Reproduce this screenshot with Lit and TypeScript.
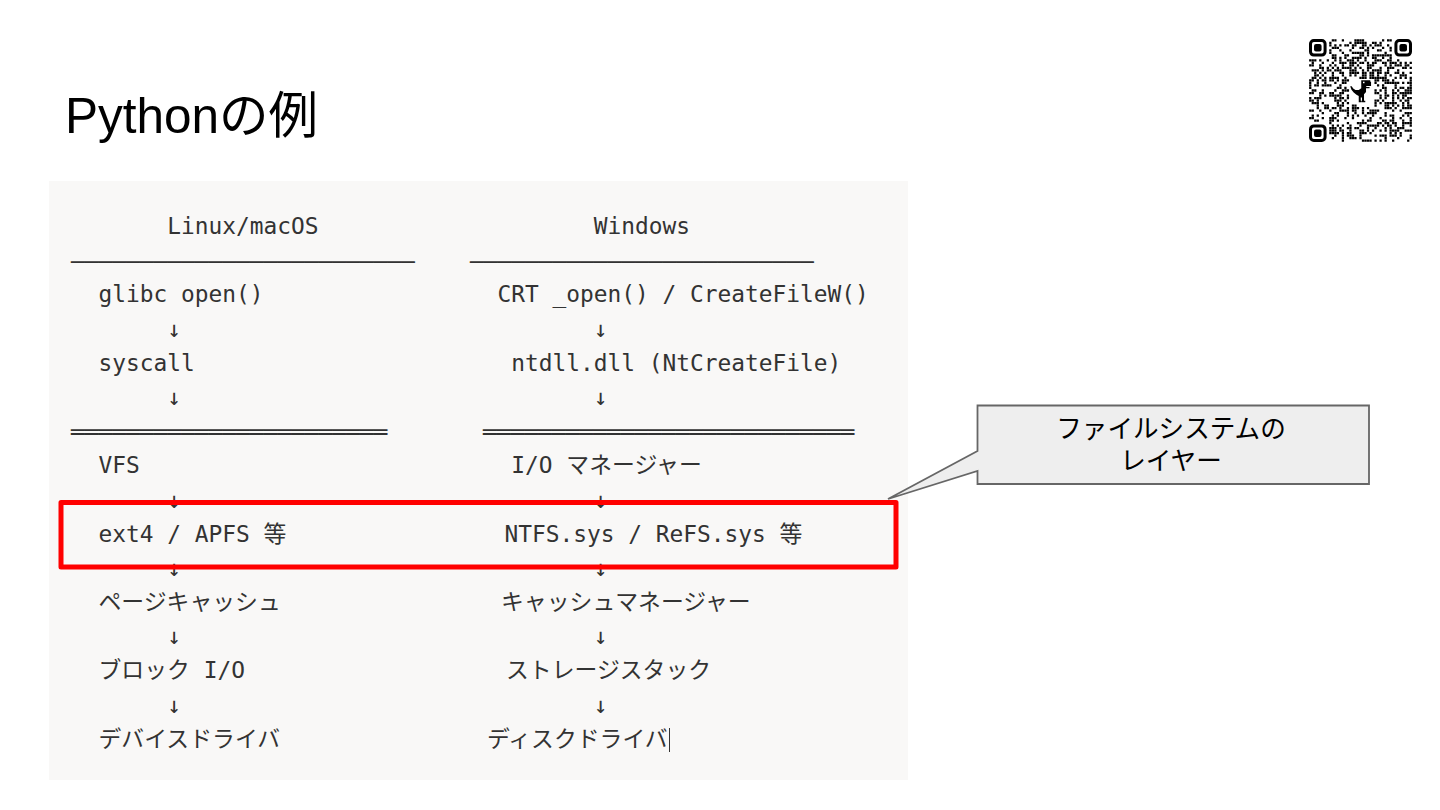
import { LitElement, html, css, svg } from "lit";
import { customElement } from "lit/decorators.js";

type Cell = { t: string; x: number; rule?: "single" | "double"; caret?: boolean };
const S = "─".repeat(25);
const D = (n: number) => "═".repeat(n);
const ARROW_L = { t: "↓", x: 96.3 };
const ARROW_R = { t: "↓", x: 123.8 };

const ROWS: [Cell, Cell][] = [
  [{ t: "Linux/macOS", x: 96.3 }, { t: "Windows", x: 123.8 }],
  [{ t: S, x: 0, rule: "single" }, { t: S, x: 0, rule: "single" }],
  [{ t: "glibc open()", x: 27.5 }, { t: "CRT _open() / CreateFileW()", x: 27.5 }],
  [ARROW_L, ARROW_R],
  [{ t: "syscall", x: 27.5 }, { t: "ntdll.dll (NtCreateFile)", x: 41.3 }],
  [ARROW_L, ARROW_R],
  [{ t: D(23), x: 0, rule: "double" }, { t: D(27), x: 13, rule: "double" }],
  [{ t: "VFS", x: 27.5 }, { t: "I/O マネージャー", x: 41.3 }],
  [ARROW_L, ARROW_R],
  [{ t: "ext4 / APFS 等", x: 27.5 }, { t: "NTFS.sys / ReFS.sys 等", x: 34.5 }],
  [ARROW_L, ARROW_R],
  [{ t: "ページキャッシュ", x: 27.5 }, { t: "キャッシュマネージャー", x: 31 }],
  [ARROW_L, ARROW_R],
  [{ t: "ブロック I/O", x: 27.5 }, { t: "ストレージスタック", x: 36 }],
  [ARROW_L, ARROW_R],
  [{ t: "デバイスドライバ", x: 27.5 }, { t: "ディスクドライバ", x: 17, caret: true }],
];

function qrPath(): string {
  const n = 41;
  let seed = 20240611;
  const rnd = () => ((seed = (seed * 1664525 + 1013904223) >>> 0) / 4294967296);
  let d = "";
  for (let y = 0; y < n; y++) {
    for (let x = 0; x < n; x++) {
      const v = rnd();
      const inTL = x < 8 && y < 8;
      const inTR = x >= n - 8 && y < 8;
      const inBL = x < 8 && y >= n - 8;
      const inC = x >= 16 && x <= 25 && y >= 16 && y <= 25;
      if (inTL || inTR || inBL || inC) continue;
      if (v < 0.45) d += `M${x + 0.05} ${y + 0.05}h.9v.9h-.9z`;
    }
  }
  return d;
}

@customElement("app-root")
export class AppRoot extends LitElement {
  static styles = css`
    :host {
      display: block;
      position: relative;
      width: 1440px;
      height: 810px;
      overflow: hidden;
      background: #fff;
    }
    .head {
      display: flex;
      justify-content: space-between;
      align-items: flex-start;
      height: 181px;
      box-sizing: border-box;
      padding: 39px 28px 0 65px;
    }
    h1 {
      margin: 47px 0 0;
      font: 400 49.5px/60px "Liberation Sans", "Noto Sans CJK JP", sans-serif;
      color: #000;
    }
    .qr {
      width: 103px;
      height: 103px;
      display: block;
      filter: blur(0.35px);
    }
    .panel {
      margin-left: 49px;
      width: 859px;
      height: 599px;
      box-sizing: border-box;
      padding: 28px 0 0 22px;
      background: #f9f8f7;
      color: #333;
      font: 400 22.85px/34.2px "DejaVu Sans Mono", "Noto Sans CJK JP", monospace;
    }
    .row {
      display: grid;
      grid-template-columns: 399px 1fr;
      height: 34.2px;
    }
    .cell {
      white-space: pre;
    }
    .single {
      padding-top: 2px;
      font-weight: 700;
    }
    .double {
      padding-top: 1px;
      font-weight: 700;
    }
    .caret {
      display: inline-block;
      width: 1px;
      height: 24px;
      margin-left: 1px;
      background: #333;
      vertical-align: -5px;
    }
    .overlay {
      position: absolute;
      left: 0;
      top: 0;
      width: 1440px;
      height: 810px;
      pointer-events: none;
    }
    .label {
      position: absolute;
      left: 977px;
      top: 405px;
      width: 392px;
      height: 79px;
      box-sizing: border-box;
      padding: 8px 4px 0 0;
      text-align: center;
      color: #000;
      font: 400 25.6px/32px "Liberation Sans", "Noto Sans CJK JP", sans-serif;
    }
  `;

  private finder(x: number, y: number) {
    return svg`<rect x=${x + 0.6} y=${y + 0.6} width="5.8" height="5.8" rx="1.3" fill="none" stroke="#000" stroke-width="1.2"></rect>
      <rect x=${x + 2} y=${y + 2} width="3" height="3" rx="0.8" fill="#000"></rect>`;
  }

  render() {
    return html`
      <div class="head">
        <h1>Pythonの例</h1>
        <svg class="qr" viewBox="0 0 41 41" aria-hidden="true">
          <path d=${qrPath()} fill="#000"></path>
          ${this.finder(0, 0)} ${this.finder(34, 0)} ${this.finder(0, 34)}
          <path
            d="M20.8 16.4H24.4V17H24.7V18.7H22.8V19.1H24.1V19.6H22.7V21.1L21.9 22V24.6H22.4V25.2H21.1V23.3H20.6V24.6H21V25.2H19.8V22.7L18.9 22.2L17.8 21.3L16.9 20.2L16.4 18.8H17L17.6 19.7L18.5 20.3H19.8L20.8 19.6Z"
            fill="#000"
          ></path>
          <rect x="21.5" y="17" width=".6" height=".6" fill="#fff"></rect>
        </svg>
      </div>
      <div class="panel">
        ${ROWS.map(
          (r) => html`<div class="row">
            ${r.map(
              (c) => html`<div
                class="cell ${c.rule ?? ""}"
                style="padding-left:${c.x}px"
              >${c.t}${c.caret ? html`<span class="caret"></span>` : ""}</div>`
            )}
          </div>`
        )}
      </div>
      <svg class="overlay" viewBox="0 0 1440 810" aria-hidden="true">
        <rect x="61" y="502.5" width="835" height="64.5" fill="none" stroke="#f00" stroke-width="5" stroke-linejoin="round"></rect>
        <path
          d="M977.5 405.5H1369V484H977.5V471L888 499L977.5 451Z"
          fill="#eeeeee"
          stroke="#666"
          stroke-width="1.8"
        ></path>
      </svg>
      <div class="label">ファイルシステムの<br />レイヤー</div>
    `;
  }
}
